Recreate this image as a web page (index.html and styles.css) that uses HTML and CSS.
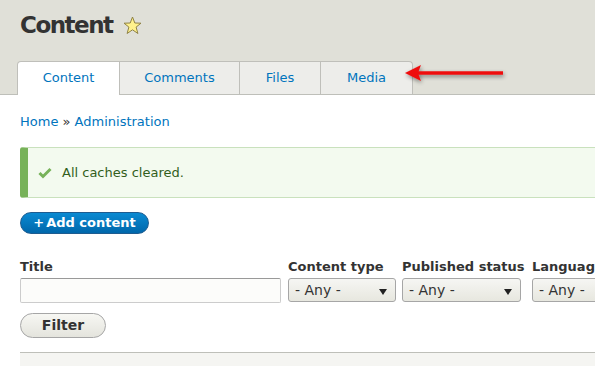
FILE: index.html
```html
<html>

<head>
    <meta charset="utf-8">
    <link rel="stylesheet" href="styles.css">
</head>

<body>

    <div class="branding">
        <h1 class="page-title">Content
            <svg class="star" width="19" height="19" viewBox="0 0 19 19">
                <polygon points="9.5,1 11.8,7 18,7.2 13.1,11.1 14.9,17.5 9.5,13.8 4.1,17.5 5.9,11.1 1,7.2 7.2,7" fill="#fff28c" stroke="#8f8244" stroke-width="1" stroke-linejoin="round"/>
            </svg>
        </h1>
        <ul class="tabs">
            <li class="tab active tab-content">Content</li>
            <li class="tab tab-comments">Comments</li>
            <li class="tab tab-files">Files</li>
            <li class="tab tab-media">Media</li>
        </ul>
        <svg class="arrow" width="110" height="30" viewBox="0 0 110 30">
            <defs>
                <filter id="shadow" x="-20%" y="-50%" width="140%" height="200%">
                    <feGaussianBlur in="SourceAlpha" stdDeviation="2"/>
                    <feOffset dx="1" dy="2"/>
                    <feComponentTransfer><feFuncA type="linear" slope="0.45"/></feComponentTransfer>
                    <feMerge><feMergeNode/><feMergeNode in="SourceGraphic"/></feMerge>
                </filter>
            </defs>
            <g filter="url(#shadow)">
                <line x1="16" y1="15" x2="101" y2="15" stroke="#ee1111" stroke-width="3.5"/>
                <polygon points="3,15 19,7 16,15 19,23" fill="#ee1111"/>
            </g>
        </svg>
    </div>

    <div class="page">

        <div class="breadcrumb"><a>Home</a> » <a>Administration</a></div>

        <div class="messages">
            <svg class="check" width="14" height="12" viewBox="0 0 14 12">
                <polyline points="1.5,6 5,9.5 12.5,2" fill="none" stroke="#77b259" stroke-width="3"/>
            </svg>
            All caches cleared.
        </div>

        <a class="button-add"><span class="plus">+</span>Add content</a>

        <div class="filters">
            <div class="filter title-filter">
                <label>Title</label>
                <div class="text-input"></div>
            </div>
            <div class="filter type-filter">
                <label>Content type</label>
                <div class="select">- Any -<span class="caret"></span></div>
            </div>
            <div class="filter status-filter">
                <label>Published status</label>
                <div class="select">- Any -<span class="caret"></span></div>
            </div>
            <div class="filter lang-filter">
                <label>Language</label>
                <div class="select">- Any -<span class="caret"></span></div>
            </div>
        </div>

        <a class="button">Filter</a>

        <div class="table-head"></div>

    </div>

</body>

</html>
```

FILE: styles.css
```css
body{
    margin: 0;
    width: 595px;
    height: 366px;
    overflow: hidden;
    font-family: "DejaVu Sans", sans-serif;
    font-size: 13px;
    color: #333;
    background: white;
}

.branding{
    position: relative;
    height: 94px;
    background: #e0e0d8;
    border-bottom: 1px solid #bebfb9;
}

.page-title{
    margin: 0;
    padding: 11px 0 0 20px;
    height: 52px;
    box-sizing: border-box;
    font-size: 23px;
    line-height: 28px;
    font-weight: bold;
    letter-spacing: -1.5px;
    color: #333;
}

.star{
    vertical-align: -2px;
    margin-left: 4px;
}

.tabs{
    display: flex;
    margin: 9px 0 0 17px;
    padding: 0;
    list-style: none;
}

.tab{
    flex-shrink: 0;
    box-sizing: border-box;
    height: 33px;
    line-height: 32px;
    text-align: center;
    background: #ededea;
    color: #0074bd;
    border: 1px solid #bfbfba;
    border-left: none;
    border-bottom: none;
}

.tab-content{
    width: 103px;
}

.tab-comments{
    width: 120px;
}

.tab-files{
    width: 81px;
}

.tab-media{
    width: 92px;
}

.tab:first-child{
    border-left: 1px solid #bfbfba;
    border-top-left-radius: 4px;
}

.tab:last-child{
    border-top-right-radius: 4px;
}

.tab.active{
    background: white;
    height: 34px;
}

.arrow{
    position: absolute;
    left: 402px;
    top: 58px;
}

.page{
    padding: 0 0 0 20px;
}

.breadcrumb{
    padding-top: 19px;
    line-height: 16px;
}

.breadcrumb a{
    color: #0074bd;
}

.messages{
    margin-top: 17px;
    height: 51px;
    box-sizing: border-box;
    display: flex;
    align-items: center;
    padding-left: 10px;
    background: #f3faef;
    color: #325e1c;
    border: 1px solid #c9e1bd;
    border-left: 8px solid #77b259;
    border-right: none;
    border-radius: 3px 0 0 3px;
}

.check{
    margin-right: 10px;
}

.button-add{
    display: block;
    margin-top: 14px;
    width: 129px;
    height: 22px;
    box-sizing: border-box;
    line-height: 20px;
    text-align: center;
    color: white;
    font-weight: bold;
    background: linear-gradient(#0a8ad2, #0067ab);
    border: 1px solid #1e5c90;
    border-radius: 12px;
}

.plus{
    margin-right: 2px;
}

.filters{
    display: flex;
    margin-top: 25px;
}

.filter{
    flex-shrink: 0;
}

.filter label{
    display: block;
    font-weight: bold;
    line-height: 16px;
    margin-bottom: 3px;
    white-space: nowrap;
}

.title-filter{
    width: 268px;
}

.type-filter{
    width: 114px;
}

.status-filter{
    width: 130px;
}

.lang-filter{
    width: 100px;
}

.text-input{
    width: 261px;
    height: 25px;
    box-sizing: border-box;
    border: 1px solid #ccc;
    border-top-color: #999;
    border-radius: 2px;
    background: #fcfcfa;
}

.select{
    position: relative;
    height: 24px;
    box-sizing: border-box;
    line-height: 22px;
    padding-left: 6px;
    font-size: 14px;
    color: #333;
    background: linear-gradient(#f6f6f3, #e7e7df);
    border: 1px solid #a6a6a6;
    border-radius: 3px;
}

.type-filter .select{
    width: 108px;
}

.status-filter .select{
    width: 119px;
}

.lang-filter .select{
    width: 80px;
}

.caret{
    position: absolute;
    right: 8px;
    top: 10px;
    border-left: 4px solid transparent;
    border-right: 4px solid transparent;
    border-top: 6px solid #222;
}

.button{
    display: block;
    margin-top: 10px;
    width: 86px;
    height: 25px;
    box-sizing: border-box;
    line-height: 23px;
    text-align: center;
    font-size: 14px;
    font-weight: bold;
    color: #333;
    background: linear-gradient(#f7f7f3, #e4e4dd);
    border: 1px solid #a6a6a6;
    border-radius: 13px;
}

.table-head{
    margin-top: 14px;
    height: 20px;
    background: #f5f5f2;
    border-top: 1px solid #bebfb9;
}
```
